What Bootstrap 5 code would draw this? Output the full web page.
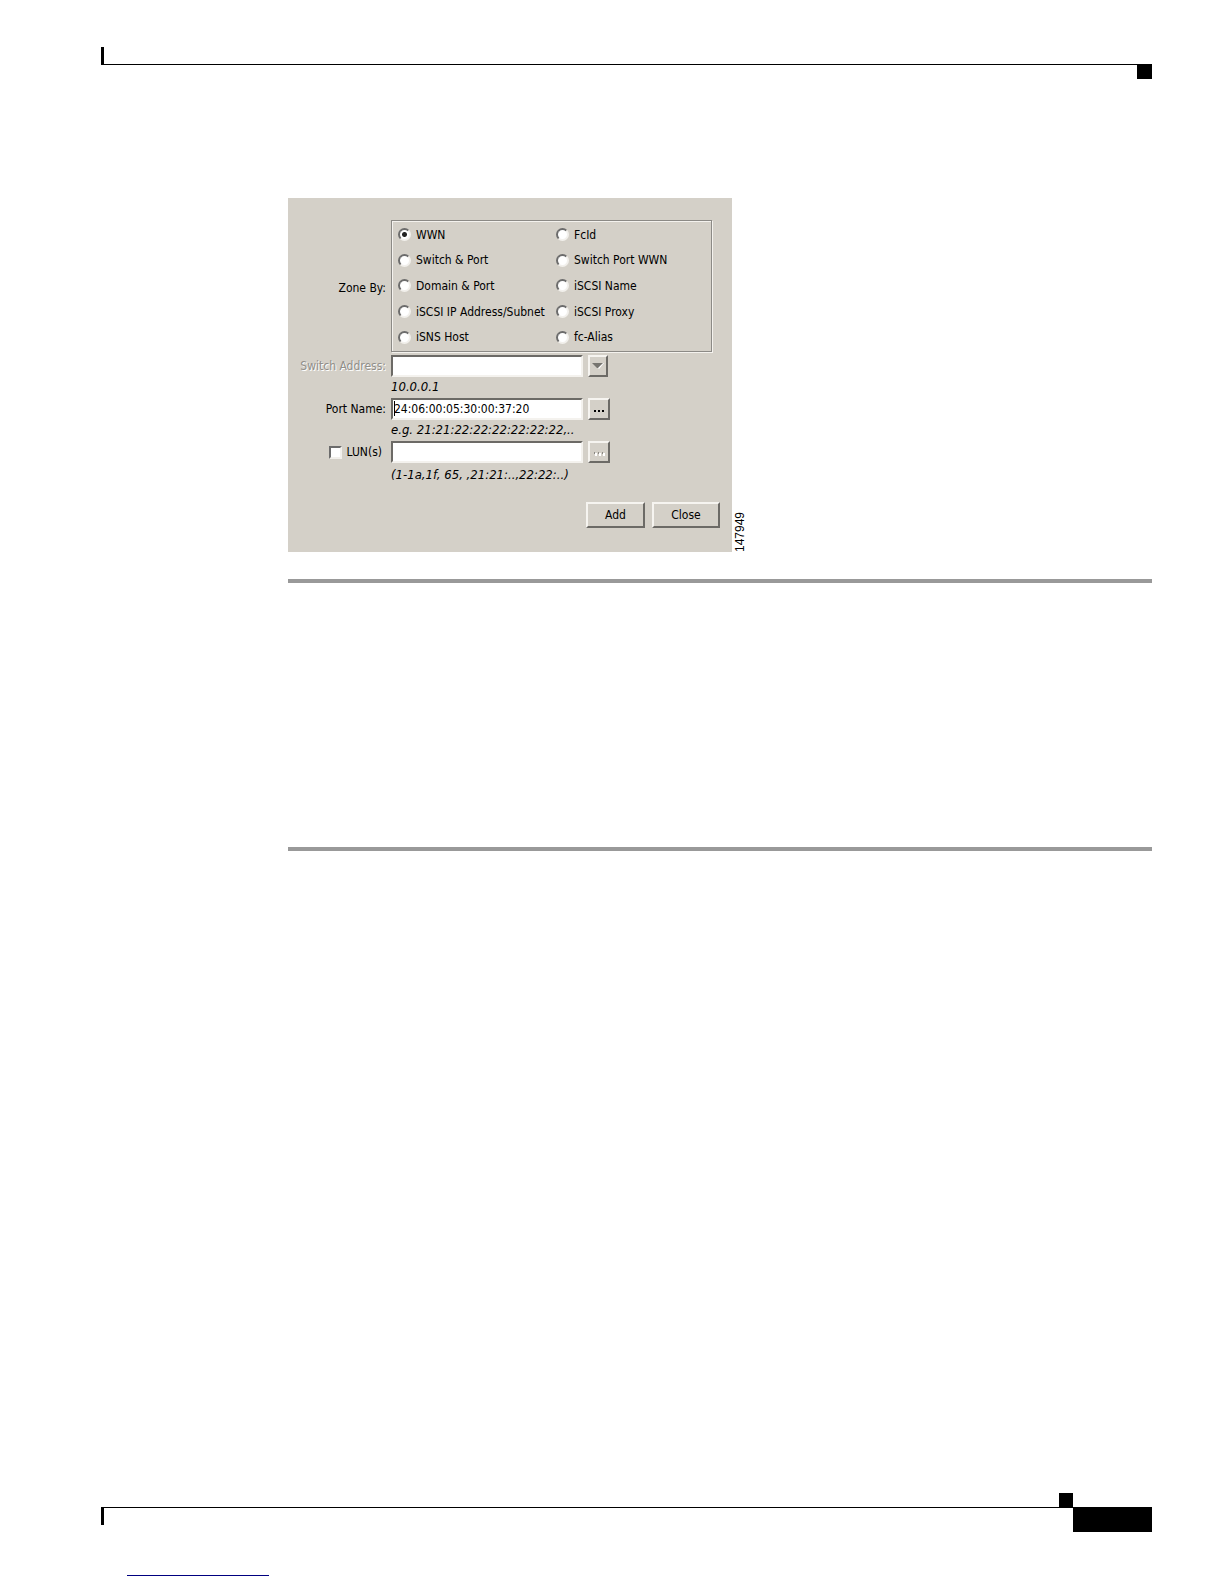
<!DOCTYPE html>
<html lang="en">
<head>
<meta charset="utf-8">
<meta name="viewport" content="width=device-width, initial-scale=1">
<title>Zone member dialog</title>
<link href="https://cdn.jsdelivr.net/npm/bootstrap@5.3.0/dist/css/bootstrap.min.css" rel="stylesheet">
<style>
  body { background: #fff; color: #000; font-family: "DejaVu Sans Condensed", "DejaVu Sans", sans-serif; }
  .sheet { padding: 47px 72px 8px 101px; min-height: 100vh; }
  .head-tick { width: 3px; height: 17px; background: #000; }
  .head-line { border-top: 1px solid #000; height: 15px; }
  .head-block { width: 15px; height: 15px; margin-top: -1px; background: #000; }
  .content-area { margin-left: 187px; padding-top: 119px; }
  .section-rule { height: 4px; background: #999; }
  .section-body { height: 264px; }
  .figure-row { margin-bottom: 27px; }
  .foot-square { width: 14px; height: 14px; margin-right: 79px; background: #000; }
  .foot-line { flex: 1; height: 18px; border-top: 1px solid #000; border-left: 3px solid #000; }
  .foot-block { width: 79px; height: 25px; background: #000; }
  .foot-link { width: 142px; height: 1px; margin: 43px 0 0 26px; background: #000080; }

  .dialog-panel { width: 444px; padding: 22px 12px 24px 0; background: #d4d0c8; font-size: 12px; line-height: 16px; }
  .form-line { display: grid; grid-template-columns: 98px 192px 1fr; column-gap: 5px; align-items: center; }
  .form-line > .side { text-align: right; }
  .form-line > .wide { grid-column: 2 / 4; }
  .zone-box { width: 321px; height: 132px; margin-bottom: 3px; padding: 1px 6px; border: 1px solid #8c8a86; box-shadow: inset 1px 1px #f4f2ee, 1px 1px #f4f2ee; }
  .zone-opts { display: grid; grid-template-columns: 158px 1fr; grid-template-rows: repeat(5, 1fr); height: 100%; }
  .opt { display: flex; align-items: center; gap: 5px; white-space: nowrap; }
  .opt input { appearance: none; flex: none; width: 13px; height: 13px; margin: 0; background: #fff; border: 2px solid; border-color: #6c6c6c #f2f0ec #f2f0ec #6c6c6c; }
  .opt input[type=radio] { border-radius: 50%; }
  .opt input[type=radio]:checked { background: radial-gradient(circle, #222 0 2px, #fff 3px); }
  .field { height: 22px; width: 100%; padding: 0 1px; background: #fff; color: #000; border: 2px solid; border-color: #6c6a66 #f4f2ee #f4f2ee #6c6a66; border-radius: 0; font-size: 12px; line-height: 16px; }
  .cursor-wrap { position: relative; }
  .cursor-wrap::before { content: ""; position: absolute; left: 3px; top: 3px; width: 1px; height: 15px; background: #000; }
  .bevel { padding: 0; color: #000; background: #d4d0c8; border: 2px solid; border-color: #f6f4f0 #6c6a66 #6c6a66 #f6f4f0; border-radius: 0; font-size: 12px; line-height: 16px; }
  .bevel.arrow { width: 20px; height: 22px; }
  .bevel.more { width: 22px; height: 22px; }
  .bevel.action { width: 59px; height: 26px; }
  .bevel.action.roomy { width: 68px; }
  .bevel svg { display: block; margin: auto; }
  .muted-text { color: #918f8a; text-shadow: 1px 1px #fff; }
  .hint { padding: 2px 0 3px; font-size: 13px; font-style: italic; }
  .action-row { gap: 7px; margin-top: 16px; }
  .figure-id { writing-mode: vertical-rl; transform: rotate(180deg); font: 12px/16px "Liberation Sans", sans-serif; }
</style>
<script src="https://cdn.jsdelivr.net/npm/bootstrap@5.3.0/dist/js/bootstrap.bundle.min.js"></script>
</head>
<body>
<div class="sheet d-flex flex-column">
  <header>
    <div class="head-tick"></div>
    <div class="head-line d-flex justify-content-end"><div class="head-block"></div></div>
  </header>

  <main class="content-area flex-grow-1">
    <div class="figure-row d-flex align-items-end">
      <form class="dialog-panel" onsubmit="return false">
        <div class="form-line">
          <span class="side" id="zone-label">Zone By:</span>
          <div class="wide zone-box" role="radiogroup" aria-labelledby="zone-label">
            <div class="zone-opts">
              <label class="opt"><input type="radio" name="zone" checked>WWN</label>
              <label class="opt"><input type="radio" name="zone">FcId</label>
              <label class="opt"><input type="radio" name="zone">Switch &amp; Port</label>
              <label class="opt"><input type="radio" name="zone">Switch Port WWN</label>
              <label class="opt"><input type="radio" name="zone">Domain &amp; Port</label>
              <label class="opt"><input type="radio" name="zone">iSCSI Name</label>
              <label class="opt"><input type="radio" name="zone">iSCSI IP Address/Subnet</label>
              <label class="opt"><input type="radio" name="zone">iSCSI Proxy</label>
              <label class="opt"><input type="radio" name="zone">iSNS Host</label>
              <label class="opt"><input type="radio" name="zone">fc-Alias</label>
            </div>
          </div>
        </div>

        <div class="form-line">
          <label class="side muted-text text-nowrap" for="switch-address">Switch Address:</label>
          <input class="field" id="switch-address" type="text" disabled>
          <button class="bevel arrow" type="button" aria-label="Choose switch address" disabled>
            <svg width="12" height="6" viewBox="0 0 12 6"><path d="M1 0H12L7 6z" fill="#fff"/><path d="M0 0H11L6 5H5z" fill="#777570"/></svg>
          </button>
        </div>
        <div class="form-line hint"><span class="wide">10.0.0.1</span></div>

        <div class="form-line">
          <label class="side" for="port-name">Port Name:</label>
          <div class="cursor-wrap"><input class="field d-block" id="port-name" type="text" value="24:06:00:05:30:00:37:20"></div>
          <button class="bevel more" type="button" aria-label="Browse port names">
            <svg width="12" height="8" viewBox="0 0 12 8"><path d="M1 5h2v2H1zM5 5h2v2H5zM9 5h2v2H9z" fill="#000"/></svg>
          </button>
        </div>
        <div class="form-line hint"><span class="wide">e.g. 21:21:22:22:22:22:22:22,..</span></div>

        <div class="form-line">
          <label class="opt justify-content-end pe-1"><input type="checkbox">LUN(s)</label>
          <input class="field" type="text" aria-label="LUN list" disabled>
          <button class="bevel more" type="button" aria-label="Browse LUNs" disabled>
            <svg width="12" height="8" viewBox="0 0 12 8"><path d="M2 5h2v3H2zM6 5h2v3H6zM10 5h2v3h-2z" fill="#fff"/><path d="M1 4h1v2H1zM5 4h1v2H5zM9 4h1v2H9z" fill="#8a8883"/></svg>
          </button>
        </div>
        <div class="form-line hint pt-1"><span class="wide">(1-1a,1f, 65, ,21:21:..,22:22:..)</span></div>

        <div class="action-row d-flex justify-content-end">
          <button class="bevel action" type="submit">Add</button>
          <button class="bevel action roomy" type="button">Close</button>
        </div>
      </form>
      <span class="figure-id">147949</span>
    </div>
    <div class="section-rule"></div>
    <div class="section-body"></div>
    <div class="section-rule"></div>
  </main>

  <footer>
    <div class="foot-square ms-auto"></div>
    <div class="d-flex">
      <div class="foot-line"></div>
      <div class="foot-block"></div>
    </div>
    <div class="foot-link"></div>
  </footer>
</div>
</body>
</html>
